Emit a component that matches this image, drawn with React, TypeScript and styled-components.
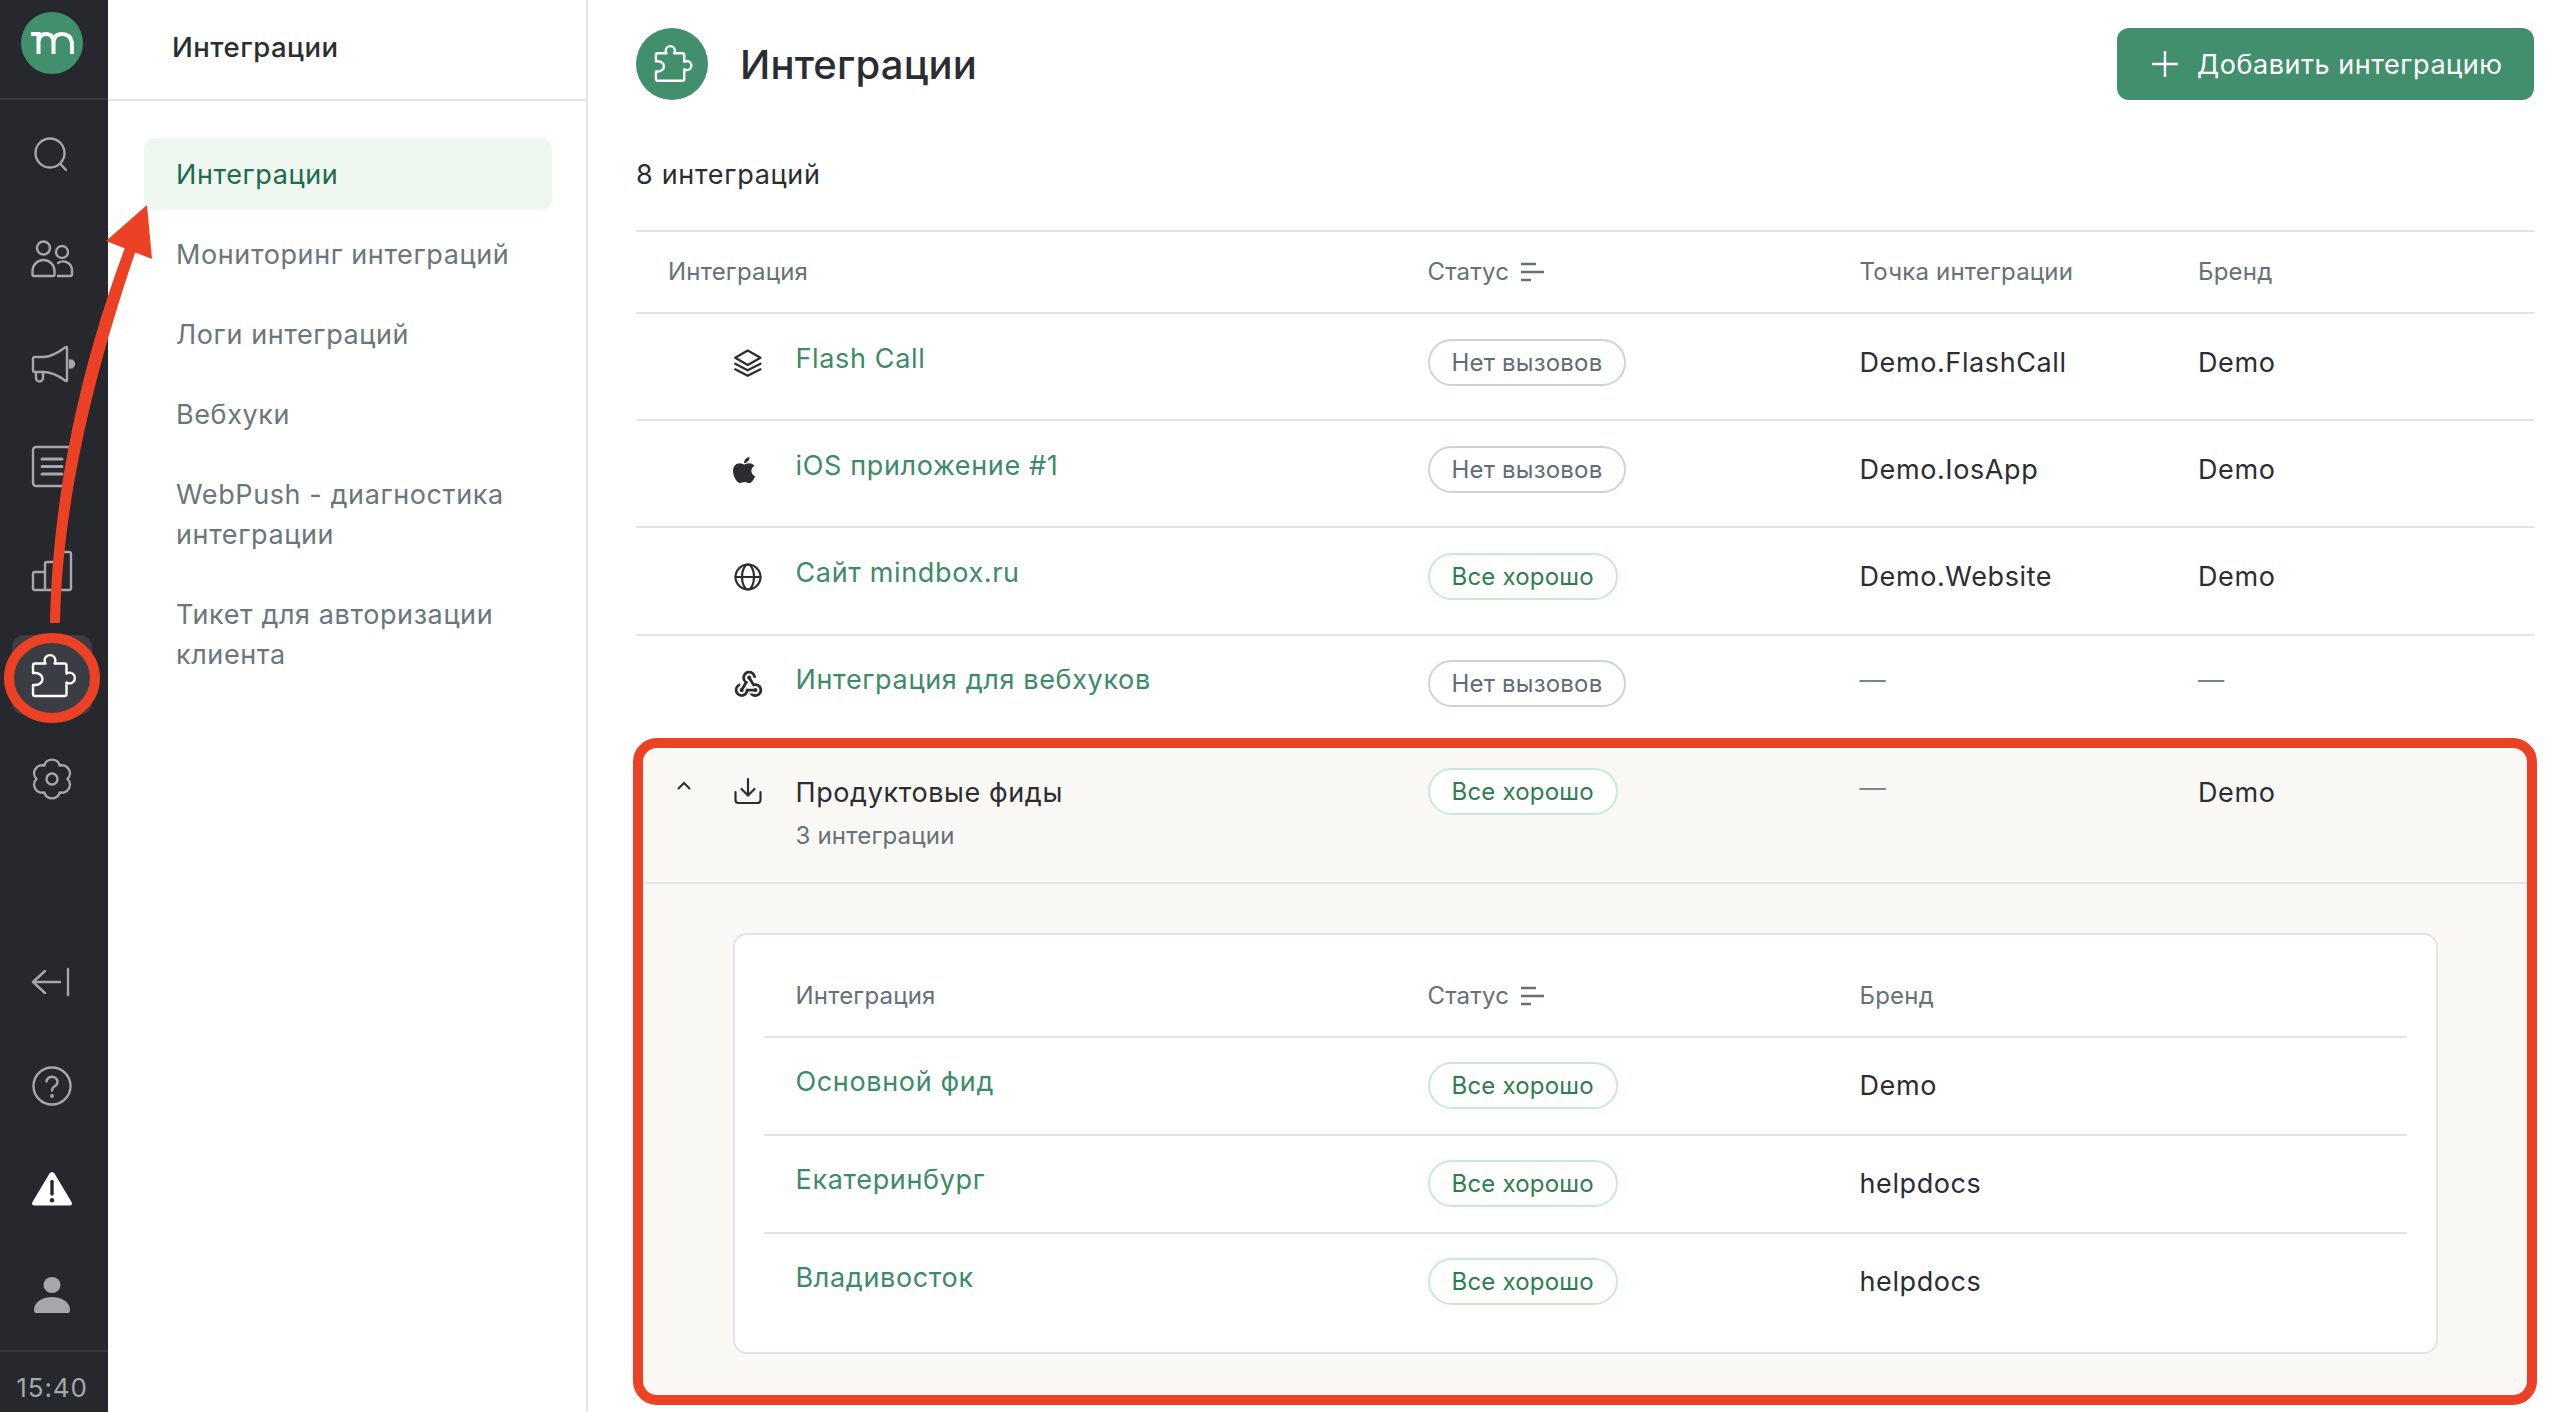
import styled, { createGlobalStyle } from 'styled-components';
import { FaApple } from 'react-icons/fa';
import { MdOutlineWebhook } from 'react-icons/md';

const GlobalStyle = createGlobalStyle`
  html, body {
    margin: 0;
    padding: 0;
    background: #fff;
  }
  body {
    font-family: Inter, "Noto Sans", sans-serif;
    color: #2b2d33;
    overflow: hidden;
  }
  * {
    box-sizing: border-box;
  }
`;

const PUZZLE =
  'M9 14.5H19.5c-.6-1-.9-2-.9-3a5.4 5.4 0 0 1 10.8 0c0 1-.3 2-.9 3H38.5a2 2 0 0 1 2 2v8c1-.6 2-.9 3-.9a5.4 5.4 0 0 1 0 10.8c-1 0-2-.3-3-.9V45a2 2 0 0 1-2 2H9a2 2 0 0 1-2-2V36h2.5a7 6 0 0 0 0-12H7v-7.5a2 2 0 0 1 2-2z';

function NavIcon({ name }: { name: string }) {
  return (
    <svg width="52" height="52" viewBox="0 0 52 52" fill="none" stroke="currentColor" strokeWidth="2.4" strokeLinecap="round" strokeLinejoin="round">
      {name === 'search' && (
        <>
          <circle cx="24" cy="24" r="14.5" />
          <path d="M34.5 35 40 41" />
        </>
      )}
      {name === 'people' && (
        <>
          <circle cx="17.5" cy="15" r="6.5" />
          <path d="M8 43H27a1.5 1.5 0 0 0 1.5-1.5V38a11 11 0 0 0-22 0v3.5A1.5 1.5 0 0 0 8 43z" />
          <circle cx="36" cy="19" r="6" />
          <path d="M32 43H44a2 2 0 0 0 2-2v-3a9 9 0 0 0-14-8" />
        </>
      )}
      {name === 'megaphone' && (
        <>
          <path d="M9 20H17C26 20 33 15 39 10.5q2-1.5 2 .5V43q0 2-2 .5C33 39 26 35 17 35H9a2 2 0 0 1-2-2V22a2 2 0 0 1 2-2z" />
          <path d="M10 35v6a3.5 3.5 0 0 0 7 0v-6" />
          <path d="M44 23.5a4 3.5 0 0 1 0 7z" fill="currentColor" />
        </>
      )}
      {name === 'list' && (
        <>
          <rect x="7" y="6" width="38" height="39" rx="3" />
          <path d="M16 18H36M16 25.500H36M16 33H36" strokeWidth="3" />
        </>
      )}
      {name === 'chart' && (
        <path d="M9 27H19V19a2 2 0 0 1 2-2H32V9a2 2 0 0 1 2-2H43a2 2 0 0 1 2 2V43a2 2 0 0 1-2 2H9a2 2 0 0 1-2-2V29a2 2 0 0 1 2-2zM19 27V45M32 17V45" />
      )}
      {name === 'puzzle' && <path d={PUZZLE} />}
      {name === 'gear' && (
        <>
          <path d="M18.250 12.600A8 8 0 0 1 33.750 12.600 8 8 0 0 1 41.500 26 8 8 0 0 1 33.750 39.400 8 8 0 0 1 18.250 39.400 8 8 0 0 1 10.500 26 8 8 0 0 1 18.250 12.600z" />
          <circle cx="26" cy="26" r="5.500" />
        </>
      )}
      {name === 'back' && <path d="M7 26H34M19 15 7 26 19 37M42 13V39" />}
      {name === 'help' && (
        <>
          <circle cx="26" cy="26" r="18.500" />
          <path d="M20.500 21.500a5.500 5 0 1 1 8.500 4.500c-2 1.200-3 2.200-3 4.500" />
          <circle cx="26" cy="36" r=".8" fill="currentColor" />
        </>
      )}
      {name === 'warning' && (
        <>
          <path d="M23.500 9.500q2.500-3 5 0L45.500 38q1.500 3.600-2 3.600H8.500q-3.500 0-2-3.600z" fill="#fff" stroke="none" />
          <path d="M26 17.500V30" stroke="#26282e" strokeWidth="3.400" />
          <circle cx="26" cy="36.300" r="2.200" fill="#26282e" stroke="none" />
        </>
      )}
      {name === 'user' && (
        <>
          <ellipse cx="26" cy="17" rx="8.500" ry="8" fill="currentColor" stroke="none" />
          <path d="M8 42C8 33 18 29 26 29S44 33 44 42q0 3-2 3H10q-2 0-2-3z" fill="currentColor" stroke="none" />
        </>
      )}
    </svg>
  );
}

function RowIcon({ name }: { name: string }) {
  return (
    <svg width="28" height="28" viewBox="0 0 28 28" fill="none" stroke="currentColor" strokeWidth="2.200" strokeLinecap="round" strokeLinejoin="round">
      {name === 'layers' && <path d="M13.700 1.500 26.500 8.700 13.700 16 1.200 8.700zM1.200 14.700 13.700 21.300 26.500 14.700M1.200 20.300 13.700 26.800 26.500 20.300" />}
      {name === 'globe' && (
        <>
          <circle cx="14" cy="14" r="12.500" />
          <ellipse cx="14" cy="14" rx="6" ry="12.500" />
          <path d="M1.500 14H26.500" />
        </>
      )}
      {name === 'download' && <path d="M14 2V18M7.500 12 14 18.500 20.500 12M1.500 15V23a3 3 0 0 0 3 3H23.500a3 3 0 0 0 3-3V15" />}
    </svg>
  );
}

function SortIcon() {
  return (
    <svg width="23" height="20" viewBox="0 0 23 20" stroke="#667177" strokeWidth="2.400">
      <path d="M0 2H15M0 10H23M0 18H10" />
    </svg>
  );
}

const Page = styled.div`
  position: relative;
  display: flex;
  width: 2562px;
  height: 1412px;
  overflow: hidden;
`;

const Rail = styled.aside`
  flex: none;
  display: flex;
  flex-direction: column;
  width: 108px;
  background: #26282e;
  color: #a5a7aa;
`;

const LogoBox = styled.div`
  display: flex;
  align-items: center;
  justify-content: center;
  height: 100px;
  padding: 0 4px 13px 0;
  border-bottom: 2px solid #36383e;
`;

const Logo = styled.div`
  display: flex;
  width: 62px;
  height: 62px;
  border-radius: 50%;
  background: #428f6e;
`;

const RailGroup = styled.div<{ $bottom?: boolean }>`
  display: flex;
  flex-direction: column;
  margin-top: ${(p) => (p.$bottom ? 'auto' : '3px')};
  margin-bottom: ${(p) => (p.$bottom ? '4px' : '0')};
`;

const RailItem = styled.div`
  display: flex;
  align-items: center;
  justify-content: center;
  height: 104px;
  padding-right: 4px;
`;

const RailActive = styled.div`
  display: flex;
  align-items: center;
  justify-content: center;
  width: 80px;
  height: 80px;
  border-radius: 12px;
  background: #3a3d44;
  color: #fff;
`;

const Clock = styled.div`
  display: flex;
  align-items: center;
  justify-content: center;
  height: 62px;
  padding: 10px 4px 0 0;
  border-top: 2px solid #36383e;
  font-size: 26px;
  letter-spacing: 0.9px;
`;

const SubNav = styled.nav`
  flex: none;
  width: 480px;
  border-right: 2px solid #dfe5e9;
`;

const SubTitle = styled.div`
  display: flex;
  align-items: center;
  height: 101px;
  padding: 0 0 5px 64px;
  border-bottom: 2px solid #dfe5e9;
  font-size: 27.500px;
  font-weight: 500;
  letter-spacing: 0.5px;
`;

const SubList = styled.div`
  display: flex;
  flex-direction: column;
  gap: 8px;
  padding: 37px 34px 0 36px;
`;

const SubItem = styled.div<{ $active?: boolean }>`
  padding: 16.500px 20px 15.500px 32px;
  border-radius: 10px;
  background: ${(p) => (p.$active ? '#eef8f1' : 'transparent')};
  color: ${(p) => (p.$active ? '#206b4c' : '#6b767c')};
  font-size: 27px;
  line-height: 40px;
  letter-spacing: 0.6px;
`;

const Main = styled.main`
  flex: 1;
  padding: 28px 28px 0 48px;
  min-width: 0;
`;

const Header = styled.header`
  display: flex;
  align-items: center;
  height: 72px;
`;

const HeaderBadge = styled.div`
  display: flex;
  align-items: center;
  justify-content: center;
  width: 72px;
  height: 72px;
  border-radius: 50%;
  background: #428f6e;
  color: #fff;
  & > svg {
    margin-top: -3px;
  }
`;

const PageTitle = styled.h1`
  flex: 1;
  margin: 0 0 0 32px;
  font-size: 40px;
  font-weight: 500;
  letter-spacing: 0.2px;
`;

const AddButton = styled.button`
  display: flex;
  align-items: center;
  gap: 19px;
  width: 417px;
  height: 72px;
  padding: 0 0 0 35px;
  border: none;
  border-radius: 12px;
  background: #428f6e;
  color: #fff;
  font-family: inherit;
  font-size: 27px;
  letter-spacing: 0.55px;
`;

const Count = styled.div`
  margin-top: 54.500px;
  font-size: 27px;
  line-height: 40px;
  letter-spacing: 0.7px;
`;

const Table = styled.div`
  margin-top: 35.500px;
  border-top: 2px solid #dfe5e9;
`;

const Row = styled.div<{ $columns: string; $height: number; $last?: boolean }>`
  display: grid;
  grid-template-columns: ${(p) => p.$columns};
  align-items: start;
  height: ${(p) => p.$height}px;
  border-bottom: ${(p) => (p.$last ? 'none' : '2px solid #dfe5e9')};
`;

const HeadCell = styled.div<{ $top: number; $left?: number }>`
  display: flex;
  align-items: center;
  gap: 12px;
  padding-top: ${(p) => p.$top}px;
  padding-left: ${(p) => p.$left ?? 0}px;
  color: #667177;
  font-size: 24px;
  line-height: 36px;
  letter-spacing: 0.2px;
`;

const NameCell = styled.div<{ $top: number; $left: number }>`
  display: flex;
  align-items: flex-start;
  padding-top: ${(p) => p.$top}px;
  padding-left: ${(p) => p.$left}px;
`;

const IconSlot = styled.div<{ $offset?: number }>`
  flex: none;
  display: flex;
  align-items: center;
  justify-content: center;
  width: 28px;
  height: 40px;
  margin-top: ${(p) => p.$offset ?? 4}px;
  margin-right: 33.500px;
  color: #2b2d33;
`;

const LinkText = styled.span`
  color: #3d8a69;
  font-size: 27px;
  line-height: 40px;
  letter-spacing: 0.65px;
`;

const StatusCell = styled.div<{ $top: number }>`
  padding-top: ${(p) => p.$top}px;
`;

const Pill = styled.span<{ $ok?: boolean }>`
  display: inline-flex;
  align-items: center;
  height: 47px;
  padding: 0 22px;
  border: 2px solid ${(p) => (p.$ok ? '#c8ead4' : '#cbd4dc')};
  border-radius: 24px;
  background: #fff;
  color: ${(p) => (p.$ok ? '#2f7d4f' : '#5f6d75')};
  font-size: 24px;
  letter-spacing: 0.2px;
`;

const ValueCell = styled.div<{ $top: number }>`
  padding-top: ${(p) => p.$top}px;
  font-size: 27px;
  line-height: 40px;
  letter-spacing: 0.6px;
`;

const Dash = styled.div<{ $top: number }>`
  padding-top: ${(p) => p.$top}px;
  color: #7a868c;
  font-size: 26.200px;
  line-height: 40px;
`;

const Feed = styled.section`
  margin: -4.300px -3px 0;
  border: 10px solid #ec4125;
  border-radius: 24px;
  height: 667px;
  background: #f9f8f5;
`;

const Chevron = styled.svg`
  flex: none;
  margin-top: 8px;
  margin-right: 43px;
`;

const FeedTitle = styled.div`
  font-size: 27px;
  line-height: 40px;
  letter-spacing: 0.6px;
`;

const FeedNote = styled.div`
  margin-top: 5px;
  color: #667177;
  font-size: 24px;
  line-height: 36px;
  letter-spacing: 0.2px;
`;

const Card = styled.div`
  margin: 49px 89px 0 90px;
  padding: 0 29px;
  height: 421px;
  border: 2px solid #dfe5e9;
  border-radius: 14px;
  background: #fff;
`;

const Overlay = styled.svg`
  position: absolute;
  left: 0;
  top: 0;
  pointer-events: none;
`;

const TOP_COLS = '791.500px 432px 338.500px 1fr';
const FEED_COLS = '784.500px 432px 338.500px 1fr';
const CARD_COLS = '663.500px 432px 1fr';

const rows = [
  { icon: <RowIcon name="layers" />, name: 'Flash Call', ok: false, status: 'Нет вызовов', point: 'Demo.FlashCall', brand: 'Demo' },
  { icon: <FaApple size={30} style={{ marginLeft: -8 }} />, name: 'iOS приложение #1', ok: false, status: 'Нет вызовов', point: 'Demo.IosApp', brand: 'Demo' },
  { icon: <RowIcon name="globe" />, name: 'Сайт mindbox.ru', ok: true, status: 'Все хорошо', point: 'Demo.Website', brand: 'Demo' },
  { icon: <MdOutlineWebhook size={33} style={{ flex: 'none' }} />, name: 'Интеграция для вебхуков', ok: false, status: 'Нет вызовов', point: '', brand: '' },
];

const feeds = [
  { name: 'Основной фид', brand: 'Demo' },
  { name: 'Екатеринбург', brand: 'helpdocs' },
  { name: 'Владивосток', brand: 'helpdocs' },
];

const subItems = ['Мониторинг интеграций', 'Логи интеграций', 'Вебхуки', 'WebPush - диагностика интеграции', 'Тикет для авторизации клиента'];

function App() {
  return (
    <Page>
      <GlobalStyle />
      <Rail>
        <LogoBox>
          <Logo>
            <svg width="62" height="62" viewBox="0 0 62 62" fill="none" stroke="#fff" strokeWidth="4">
              <path d="M10 22H17.500V42M17.500 31Q17.500 22 25 22T32.500 31V42M32.500 31Q32.500 22 41 22T51 31V42" />
            </svg>
          </Logo>
        </LogoBox>
        <RailGroup>
          {['search', 'people', 'megaphone', 'list', 'chart'].map((name) => (
            <RailItem key={name}>
              <NavIcon name={name} />
            </RailItem>
          ))}
          <RailItem>
            <RailActive>
              <NavIcon name="puzzle" />
            </RailActive>
          </RailItem>
          <RailItem>
            <NavIcon name="gear" />
          </RailItem>
        </RailGroup>
        <RailGroup $bottom>
          {['back', 'help', 'warning', 'user'].map((name) => (
            <RailItem key={name}>
              <NavIcon name={name} />
            </RailItem>
          ))}
        </RailGroup>
        <Clock>15:40</Clock>
      </Rail>

      <SubNav>
        <SubTitle>Интеграции</SubTitle>
        <SubList>
          <SubItem $active>Интеграции</SubItem>
          {subItems.map((item) => (
            <SubItem key={item}>{item}</SubItem>
          ))}
        </SubList>
      </SubNav>

      <Main>
        <Header>
          <HeaderBadge>
            <svg width="44" height="44" viewBox="0 0 52 52" fill="none" stroke="currentColor" strokeWidth="2.800" strokeLinejoin="round">
              <path d={PUZZLE} />
            </svg>
          </HeaderBadge>
          <PageTitle>Интеграции</PageTitle>
          <AddButton>
            <svg width="26" height="26" viewBox="0 0 26 26" stroke="currentColor" strokeWidth="2.400">
              <path d="M13 0V26M0 13H26" />
            </svg>
            Добавить интеграцию
          </AddButton>
        </Header>

        <Count>8 интеграций</Count>

        <Table>
          <Row $columns={TOP_COLS} $height={82}>
            <HeadCell $top={22} $left={32}>Интеграция</HeadCell>
            <HeadCell $top={22}>
              Статус
              <SortIcon />
            </HeadCell>
            <HeadCell $top={22}>Точка интеграции</HeadCell>
            <HeadCell $top={22}>Бренд</HeadCell>
          </Row>
          {rows.map((row, i) => (
            <Row key={row.name} $columns={TOP_COLS} $height={107.200} $last={i === rows.length - 1}>
              <NameCell $top={24.500} $left={98}>
                <IconSlot>{row.icon}</IconSlot>
                <LinkText>{row.name}</LinkText>
              </NameCell>
              <StatusCell $top={24.500}>
                <Pill $ok={row.ok}>{row.status}</Pill>
              </StatusCell>
              {row.point ? <ValueCell $top={28.500}>{row.point}</ValueCell> : <Dash $top={24.500}>—</Dash>}
              {row.brand ? <ValueCell $top={28.500}>{row.brand}</ValueCell> : <Dash $top={24.500}>—</Dash>}
            </Row>
          ))}
          <Feed>
            <Row $columns={FEED_COLS} $height={135.500}>
              <NameCell $top={25} $left={34}>
                <Chevron width="14" height="9" viewBox="0 0 14 9" fill="none" stroke="#2b2d33" strokeWidth="2">
                  <path d="M1 8 7 2 13 8" />
                </Chevron>
                <IconSlot $offset={-2}>
                  <RowIcon name="download" />
                </IconSlot>
                <div>
                  <FeedTitle>Продуктовые фиды</FeedTitle>
                  <FeedNote>3 интеграции</FeedNote>
                </div>
              </NameCell>
              <StatusCell $top={20}>
                <Pill $ok>Все хорошо</Pill>
              </StatusCell>
              <Dash $top={20}>—</Dash>
              <ValueCell $top={25}>Demo</ValueCell>
            </Row>
            <Card>
              <Row $columns={CARD_COLS} $height={103}>
                <HeadCell $top={43} $left={31.500}>Интеграция</HeadCell>
                <HeadCell $top={43}>
                  Статус
                  <SortIcon />
                </HeadCell>
                <HeadCell $top={43}>Бренд</HeadCell>
              </Row>
              {feeds.map((feed, i) => (
                <Row key={feed.name} $columns={CARD_COLS} $height={98} $last={i === feeds.length - 1}>
                  <NameCell $top={24.500} $left={31.500}>
                    <LinkText>{feed.name}</LinkText>
                  </NameCell>
                  <StatusCell $top={24}>
                    <Pill $ok>Все хорошо</Pill>
                  </StatusCell>
                  <ValueCell $top={28.500}>{feed.brand}</ValueCell>
                </Row>
              ))}
            </Card>
          </Feed>
        </Table>
      </Main>

      <Overlay width="200" height="760" viewBox="0 0 200 760" fill="none">
        <ellipse cx="52" cy="678" rx="43" ry="40" stroke="#ec4125" strokeWidth="10" />
        <path d="M50 623C52 510 75 380 126 245L136 250C90 385 62 510 60 623Z" fill="#ec4125" />
        <path d="M147 205 106 241 152 259Z" fill="#ec4125" />
      </Overlay>
    </Page>
  );
}

export default App;
